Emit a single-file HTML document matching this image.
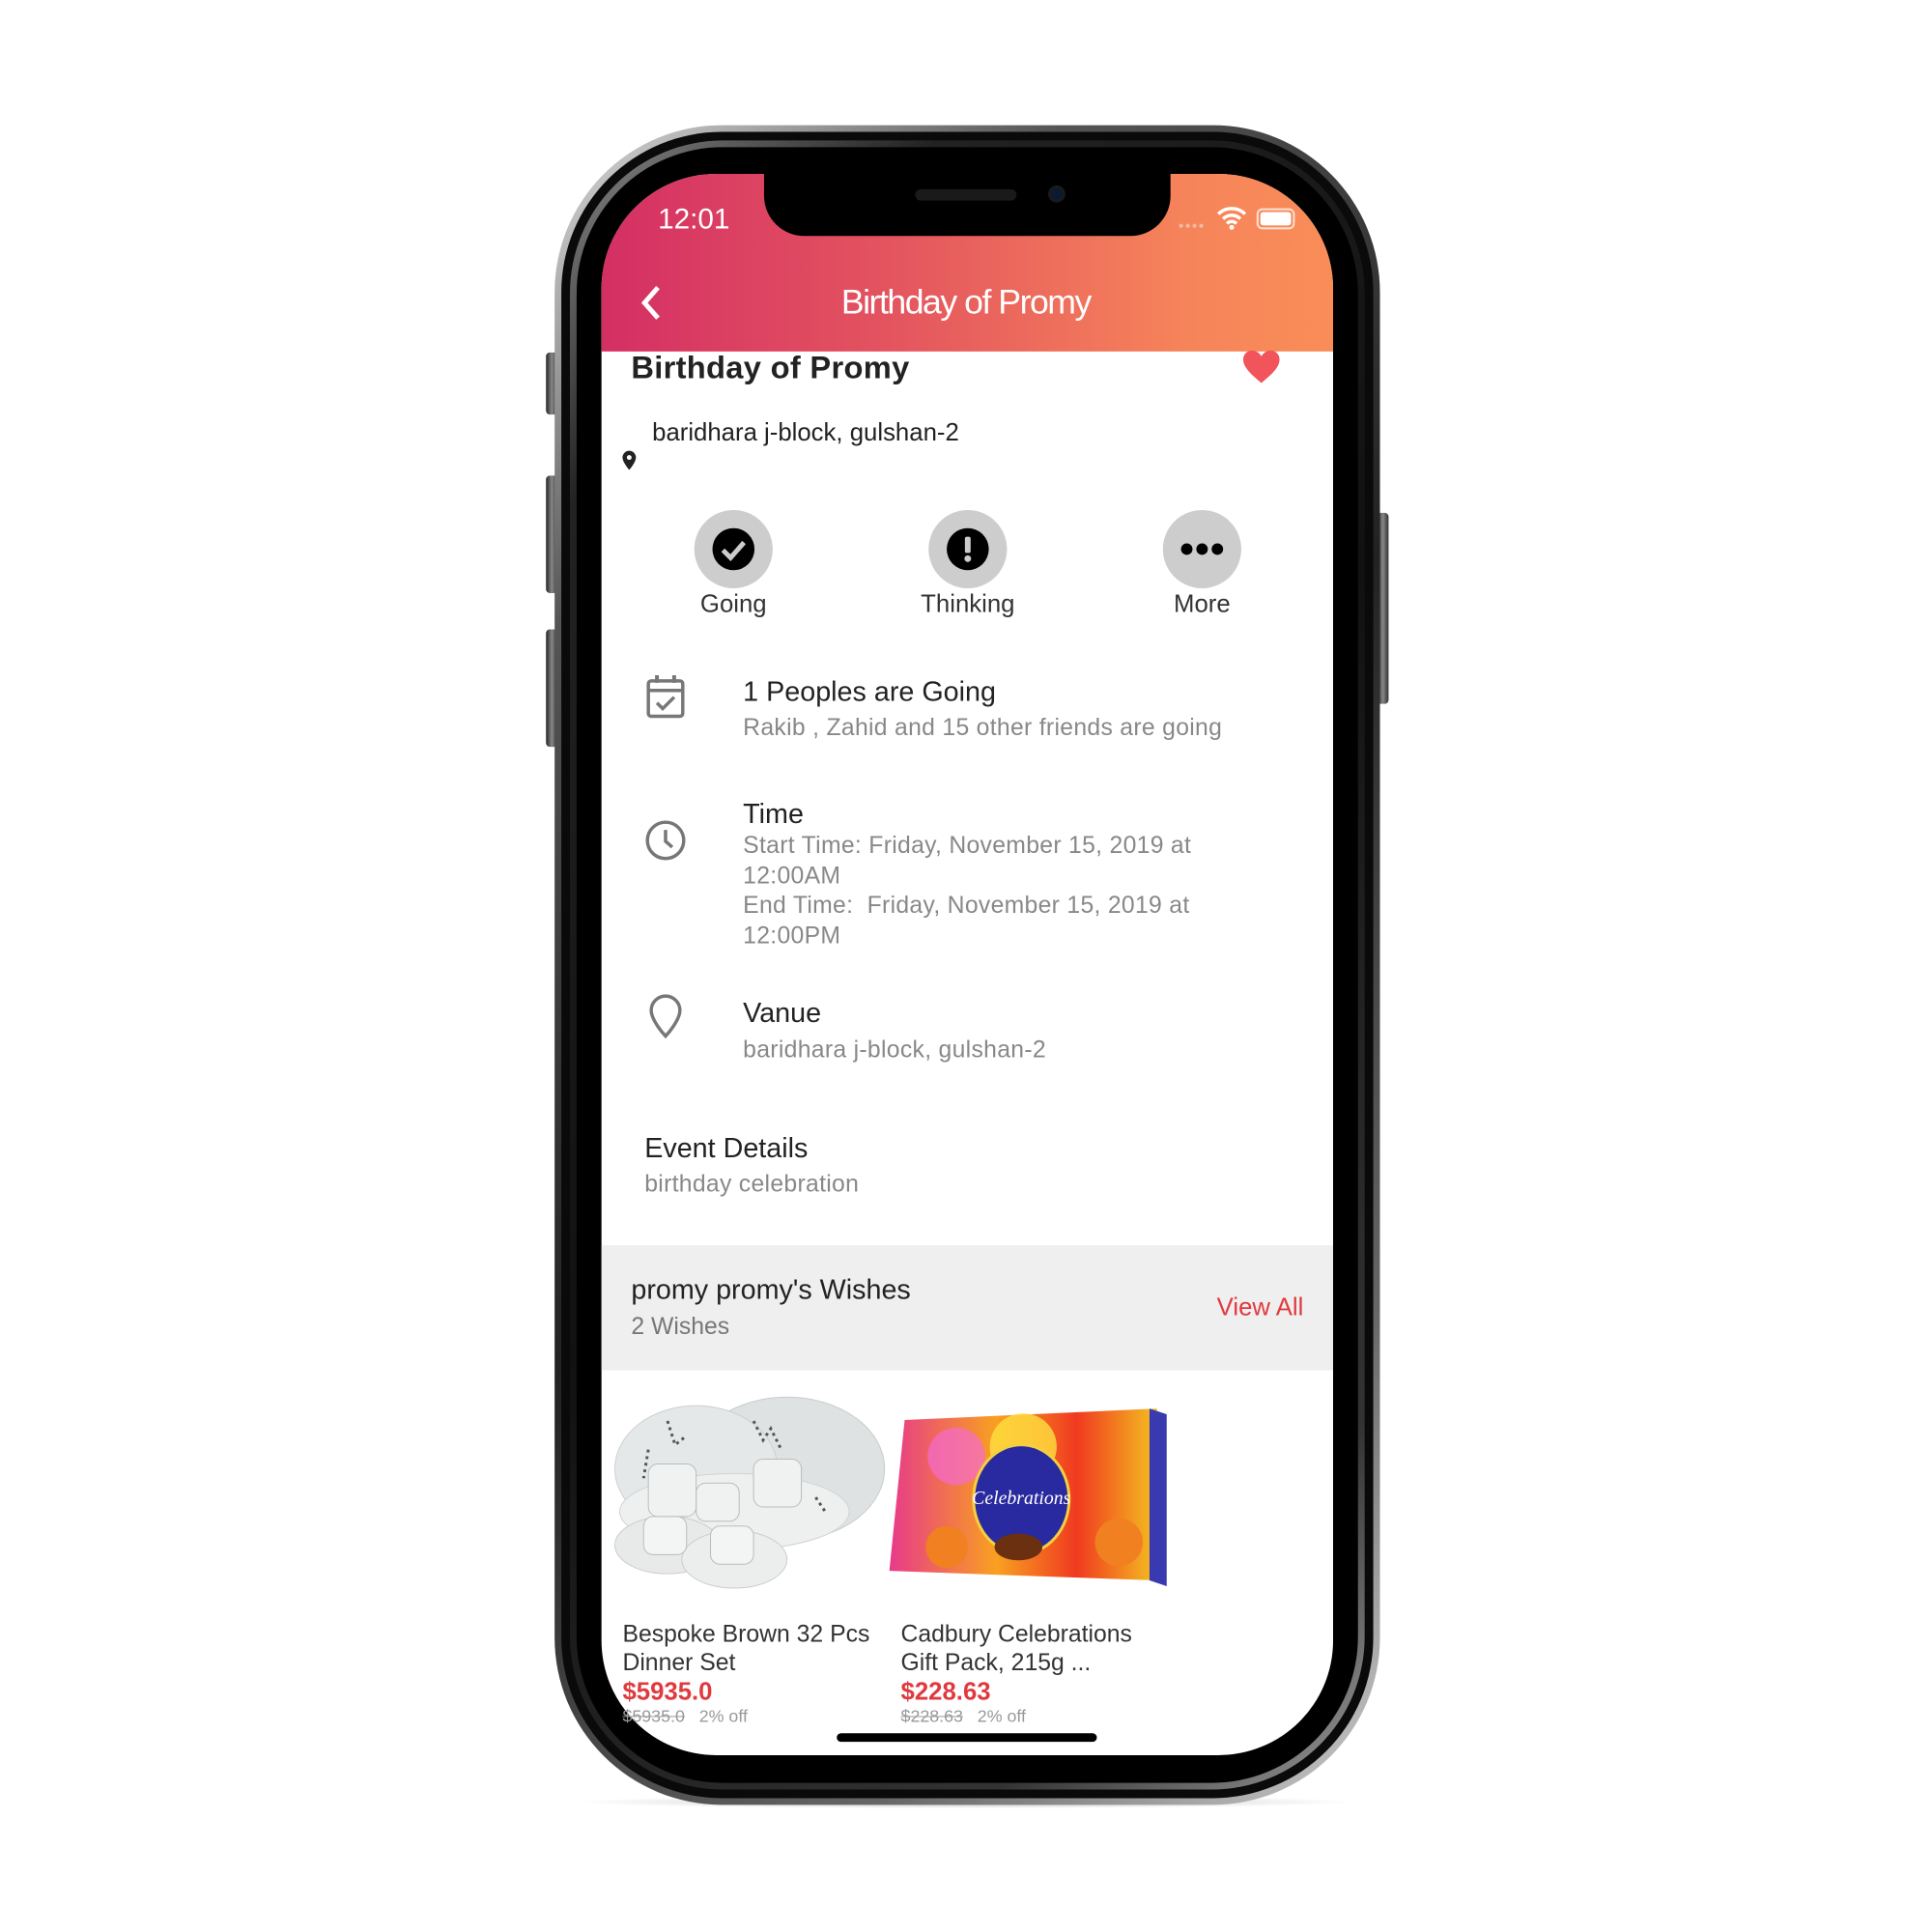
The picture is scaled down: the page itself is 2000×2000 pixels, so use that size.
<!DOCTYPE html>
<html><head><meta charset="utf-8"><style>
*{margin:0;padding:0;box-sizing:border-box}
body{width:2000px;height:2000px;background:#fff;position:relative;overflow:hidden;font-family:"Liberation Sans",Arial,sans-serif}
#w{position:absolute;left:0;top:0;width:2000px;height:2000px;transform-origin:635px 180px;transform:translate(-6.4px,0) scale(0.99,0.9885)}
.a{position:absolute}
.t{position:absolute;white-space:nowrap;line-height:1}
.btn{position:absolute;background:linear-gradient(90deg,#222,#888,#333);border-radius:4px}
</style></head><body><div id="w">
<div class="btn" style="left:571px;top:367px;width:12px;height:65px"></div>
<div class="btn" style="left:571px;top:496px;width:12px;height:123px"></div>
<div class="btn" style="left:571px;top:657px;width:12px;height:123px"></div>
<div class="btn" style="left:1440px;top:535px;width:12px;height:200px"></div>
<div class="a" style="left:600px;top:1878px;width:820px;height:14px;border-radius:50%;background:radial-gradient(#bbb,rgba(255,255,255,0) 70%)"></div>
<div class="a" style="left:580px;top:129px;width:863px;height:1759px;border-radius:175px;background:linear-gradient(135deg,#ddd,#555 20%,#222 50%,#666 80%,#ccc);"></div>
<div class="a" style="left:587px;top:136px;width:849px;height:1745px;border-radius:168px;background:#0a0a0a"></div>
<div class="a" style="left:596px;top:145px;width:831px;height:1727px;border-radius:160px;background:linear-gradient(135deg,#888,#222 15%,#111 50%,#333 85%,#999);"></div>
<div class="a" style="left:603px;top:152px;width:817px;height:1713px;border-radius:153px;background:#000"></div>
<div class="a" style="left:629px;top:180px;width:765px;height:1656px;border-radius:120px;background:#fff;overflow:hidden">
  <div class="a" style="left:0;top:0;width:765px;height:186px;background:linear-gradient(90deg,#d42f64,#e4555f 40%,#f6845a 80%,#f98d58)"></div>
  <div class="a" style="left:0;top:1122px;width:765px;height:131px;background:#efefef"></div>
</div>
<div class="a" style="left:799px;top:170px;width:425px;height:75px;background:#000;border-radius:0 0 42px 42px"></div>
<div class="a" style="left:957px;top:196px;width:106px;height:12px;border-radius:6px;background:#1a1a1a"></div>
<div class="a" style="left:1096px;top:192px;width:18px;height:18px;border-radius:50%;background:#0b1a33;border:3px solid #1a1a1a"></div>
<div class="t" style="left:688px;top:213px;font-size:30px;color:#fff">12:01</div>
<div class="t" style="left:1232px;top:230px;font-size:10px;color:#f4b8a0;letter-spacing:1px">●●●●</div>
<svg class="a" style="left:1272px;top:213px" width="32" height="26" viewBox="0 0 32 26"><path d="M2 9a20 20 0 0 1 28 0M7 14a13 13 0 0 1 18 0M11 19a7 7 0 0 1 10 0" stroke="#fff" stroke-width="3.5" fill="none"/><circle cx="16" cy="23" r="2.5" fill="#fff"/></svg>
<div class="a" style="left:1314px;top:216px;width:40px;height:22px;border:2px solid #fde2d4;border-radius:6px;padding:2px"><div style="width:100%;height:100%;background:#fff;border-radius:3px"></div></div>
<svg class="a" style="left:668px;top:296px" width="26" height="38" viewBox="0 0 26 38"><path d="M20 3L6 19l14 16" stroke="#fff" stroke-width="5" fill="none"/></svg>
<div class="t" style="left:0;width:2020px;text-align:center;top:296px;font-size:36px;color:#fff;letter-spacing:-1.5px">Birthday of Promy</div>
<div class="t" style="left:660px;top:366px;font-size:33px;color:#222;font-weight:bold;letter-spacing:0.3px">Birthday of Promy</div>
<svg class="a" style="left:1299px;top:364px" width="40" height="36" viewBox="0 0 40 36"><path d="M20 35C8 25 1 18 1 10.5 1 5 5 1 10.5 1 14.5 1 18 3.5 20 7 22 3.5 25.5 1 29.5 1 35 1 39 5 39 10.5 39 18 32 25 20 35z" fill="#f2545b"/></svg>
<div class="t" style="left:682px;top:437px;font-size:26px;color:#222">baridhara j-block, gulshan-2</div>
<svg class="a" style="left:650px;top:469px" width="16" height="22" viewBox="0 0 16 22"><path d="M8 1a7 7 0 0 0-7 7c0 5 7 13 7 13s7-8 7-13a7 7 0 0 0-7-7z" fill="#222"/><circle cx="8" cy="8" r="2.5" fill="#fff"/></svg>
<div class="a" style="left:726px;top:532px;width:82px;height:82px;border-radius:50%;background:#cdcdcd"></div>
<div class="a" style="left:971px;top:532px;width:82px;height:82px;border-radius:50%;background:#cdcdcd"></div>
<div class="a" style="left:1216px;top:532px;width:82px;height:82px;border-radius:50%;background:#cdcdcd"></div>
<svg class="a" style="left:744px;top:550px" width="46" height="46" viewBox="0 0 46 46"><circle cx="23" cy="23" r="22" fill="#000"/><path d="M12 24l8 8 14-16" stroke="#ccc" stroke-width="5" fill="none"/></svg>
<svg class="a" style="left:989px;top:550px" width="46" height="46" viewBox="0 0 46 46"><circle cx="23" cy="23" r="22" fill="#000"/><rect x="20" y="10" width="6" height="17" rx="2" fill="#ccc"/><circle cx="23" cy="33" r="3.5" fill="#ccc"/></svg>
<svg class="a" style="left:1234px;top:563px" width="46" height="20" viewBox="0 0 46 20"><circle cx="7" cy="10" r="6" fill="#000"/><circle cx="23" cy="10" r="6" fill="#000"/><circle cx="39" cy="10" r="6" fill="#000"/></svg>
<div class="t" style="left:667px;width:200px;text-align:center;top:617px;font-size:26px;color:#333">Going</div>
<div class="t" style="left:912px;width:200px;text-align:center;top:617px;font-size:26px;color:#333">Thinking</div>
<div class="t" style="left:1157px;width:200px;text-align:center;top:617px;font-size:26px;color:#333">More</div>
<svg class="a" style="left:675px;top:703px" width="42" height="48" viewBox="0 0 42 48"><rect x="3" y="8" width="36" height="37" rx="3" stroke="#777" stroke-width="3.5" fill="none"/><line x1="3" y1="18" x2="39" y2="18" stroke="#777" stroke-width="3.5"/><line x1="12" y1="2" x2="12" y2="10" stroke="#777" stroke-width="4"/><line x1="30" y1="2" x2="30" y2="10" stroke="#777" stroke-width="4"/><path d="M12 31l6 6 12-12" stroke="#777" stroke-width="3.5" fill="none"/></svg>
<div class="t" style="left:777px;top:709px;font-size:29px;color:#222">1 Peoples are Going</div>
<div class="t" style="left:777px;top:748px;font-size:25px;color:#888;letter-spacing:0.3px">Rakib , Zahid and 15 other friends are going</div>
<svg class="a" style="left:674px;top:856px" width="44" height="44" viewBox="0 0 44 44"><circle cx="22" cy="22" r="19" stroke="#777" stroke-width="3.5" fill="none"/><path d="M22 11v12l7 6" stroke="#777" stroke-width="3.5" fill="none"/></svg>
<div class="t" style="left:777px;top:837px;font-size:29px;color:#222">Time</div>
<div class="a" style="left:777px;top:868px;font-size:25px;color:#888;line-height:31.5px;letter-spacing:0.3px">Start Time: Friday, November 15, 2019 at<br>12:00AM<br>End Time:&nbsp; Friday, November 15, 2019 at<br>12:00PM</div>
<svg class="a" style="left:678px;top:1038px" width="36" height="48" viewBox="0 0 36 48"><path d="M18 3A15 15 0 0 0 3 18c0 11 15 27 15 27s15-16 15-27A15 15 0 0 0 18 3z" stroke="#777" stroke-width="3.5" fill="none"/></svg>
<div class="t" style="left:777px;top:1045px;font-size:29px;color:#222">Vanue</div>
<div class="t" style="left:777px;top:1085px;font-size:25px;color:#888;letter-spacing:0.3px">baridhara j-block, gulshan-2</div>
<div class="t" style="left:674px;top:1187px;font-size:29px;color:#222">Event Details</div>
<div class="t" style="left:674px;top:1226px;font-size:25px;color:#888;letter-spacing:0.3px">birthday celebration</div>
<div class="t" style="left:660px;top:1335px;font-size:29px;color:#222">promy promy's Wishes</div>
<div class="t" style="left:660px;top:1375px;font-size:25px;color:#777">2 Wishes</div>
<div class="t" style="left:1163px;width:200px;text-align:right;top:1353px;font-size:26px;color:#e0393e">View All</div>
<svg class="a" style="left:638px;top:1456px" width="292" height="214" viewBox="0 0 292 214">
<ellipse cx="185" cy="80" rx="102" ry="75" fill="#dfe2e2" stroke="#c8cccc"/>
<ellipse cx="90" cy="80" rx="85" ry="66" fill="#e5e8e8" stroke="#cdd0d0"/>
<ellipse cx="130" cy="125" rx="120" ry="40" fill="#eef0f0" stroke="#d0d3d3"/>
<ellipse cx="60" cy="160" rx="55" ry="30" fill="#e8eaea" stroke="#ccc"/>
<ellipse cx="130" cy="175" rx="55" ry="30" fill="#eceeee" stroke="#ccc"/>
<rect x="35" y="130" width="45" height="40" rx="10" fill="#f3f4f4" stroke="#bbb"/>
<rect x="105" y="140" width="45" height="40" rx="10" fill="#f3f4f4" stroke="#bbb"/>
<rect x="90" y="95" width="45" height="40" rx="10" fill="#f0f1f1" stroke="#bbb"/>
<rect x="150" y="70" width="50" height="50" rx="10" fill="#f0f1f1" stroke="#bbb"/>
<rect x="40" y="75" width="50" height="55" rx="10" fill="#f0f1f1" stroke="#bbb"/>
<path d="M150 30l10 20 8-12 10 20M60 30l8 25 10-8M215 110l10 15M40 60l-5 30" stroke="#555" stroke-width="3" fill="none" stroke-dasharray="3 4"/>
</svg>
<svg class="a" style="left:930px;top:1473px" width="292" height="192" viewBox="0 0 292 192">
<defs><linearGradient id="g" x1="0" x2="1"><stop offset="0" stop-color="#e83a8a"/><stop offset=".4" stop-color="#f8a020"/><stop offset=".7" stop-color="#f03a20"/><stop offset="1" stop-color="#f4c020"/></linearGradient></defs>
<polygon points="16,12 280,0 280,180 0,170" fill="url(#g)"/>
<polygon points="272,0 290,6 290,186 272,180" fill="#3a3ab0"/>
<circle cx="70" cy="50" r="30" fill="#f56bd0" opacity=".7"/><circle cx="140" cy="40" r="35" fill="#ffe040" opacity=".8"/>
<circle cx="60" cy="145" r="22" fill="#f08020"/><circle cx="240" cy="140" r="25" fill="#f08020"/>
<ellipse cx="138" cy="95" rx="50" ry="57" fill="#2a2aa0" stroke="#f4d040" stroke-width="3"/>
<text x="138" y="100" font-family="Liberation Serif,serif" font-style="italic" font-size="20" fill="#fff" text-anchor="middle">Celebrations</text>
<ellipse cx="135" cy="145" rx="25" ry="14" fill="#6a3010"/>
</svg>
<div class="a" style="left:651px;top:1694px;font-size:25px;color:#333;line-height:30px">Bespoke Brown 32 Pcs<br>Dinner Set</div>
<div class="a" style="left:942px;top:1694px;font-size:25px;color:#333;line-height:30px">Cadbury Celebrations<br>Gift Pack, 215g ...</div>
<div class="t" style="left:651px;top:1756px;font-size:26px;color:#e0393e;font-weight:bold">$5935.0</div>
<div class="t" style="left:942px;top:1756px;font-size:26px;color:#e0393e;font-weight:bold">$228.63</div>
<div class="t" style="left:651px;top:1786px;font-size:18px;color:#999"><s>$5935.0</s>&nbsp;&nbsp; 2% off</div>
<div class="t" style="left:942px;top:1786px;font-size:18px;color:#999"><s>$228.63</s>&nbsp;&nbsp; 2% off</div>
<div class="a" style="left:875px;top:1813px;width:272px;height:9px;border-radius:5px;background:#000"></div>
</div></body></html>
